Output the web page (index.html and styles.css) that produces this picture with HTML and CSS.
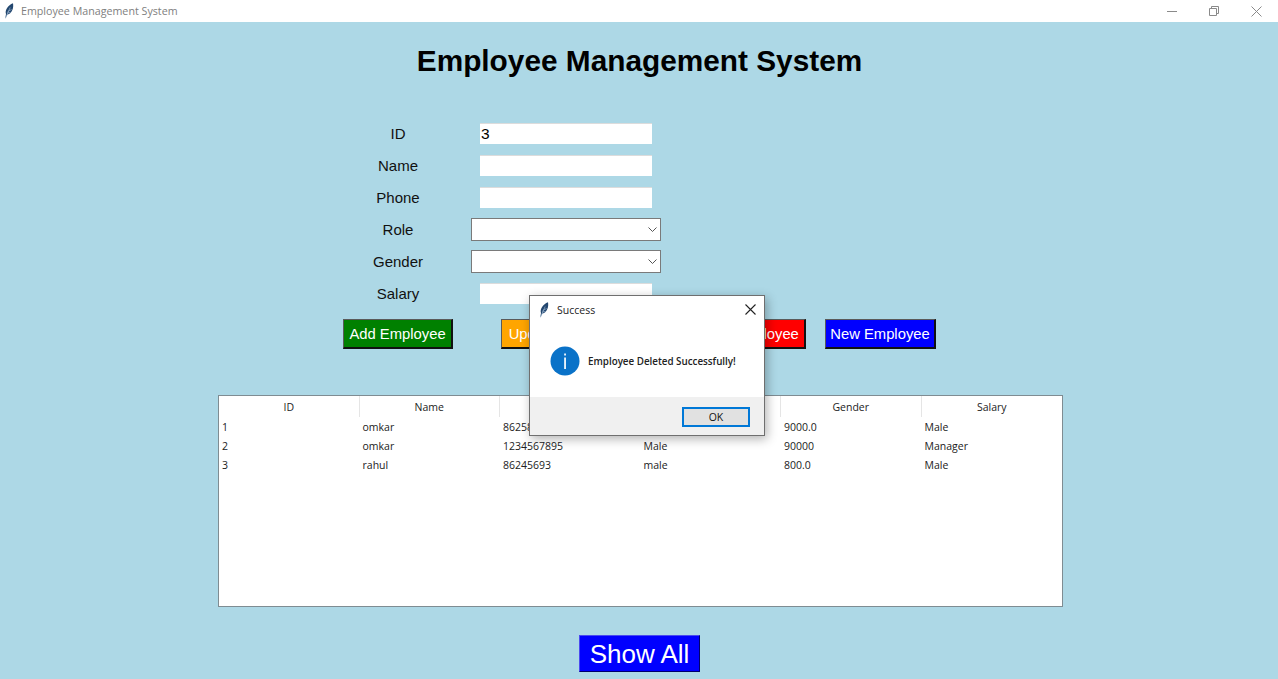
FILE: index.html
```html
<!DOCTYPE html>
<html lang="en">
<head>
    <meta charset="UTF-8">
    <meta name="viewport" content="width=device-width, initial-scale=1.0">
    <title>Employee Management System</title>
    <link rel="stylesheet" href="styles.css">
</head>
<body>
    <div class="titlebar">
        <svg class="feather" width="10" height="16" viewBox="0 0 10 16">
            <path d="M1.2 15.8 L2 11 C0.6 7.5 4 2 9 0.3 C9.8 4.5 8.4 10.5 3.4 11.6 Z" fill="#23476f"/>
            <path d="M1.6 15 L6.2 4.5 M3.6 8.5 L7.6 6.5 M3 10 L6.5 9.5" stroke="#a9c3dc" stroke-width="0.6" fill="none"/>
        </svg>
        <span class="titlebar-text">Employee Management System</span>
        <div class="window-controls">
            <svg width="10" height="10" viewBox="0 0 10 10"><path d="M0 5.5H10" stroke="#8a8a8a" fill="none"/></svg>
            <svg width="10" height="10" viewBox="0 0 10 10"><path d="M0.5 2.5H7.5V9.5H0.5Z M2.5 2.5V0.5H9.5V7.5H7.5" stroke="#8a8a8a" fill="none"/></svg>
            <svg width="11" height="11" viewBox="0 0 11 11"><path d="M0.5 0.5L10.5 10.5M10.5 0.5L0.5 10.5" stroke="#8a8a8a" fill="none"/></svg>
        </div>
    </div>

    <h1 class="heading">Employee Management System</h1>

    <div class="form-grid">
        <label>ID</label>
        <input class="entry" type="text" value="3">
        <label>Name</label>
        <input class="entry" type="text">
        <label>Phone</label>
        <input class="entry" type="text">
        <label>Role</label>
        <div class="combo">
            <svg width="9" height="5" viewBox="0 0 9 5"><path d="M0.5 0.5L4.5 4.5L8.5 0.5" stroke="#555" fill="none"/></svg>
        </div>
        <label>Gender</label>
        <div class="combo">
            <svg width="9" height="5" viewBox="0 0 9 5"><path d="M0.5 0.5L4.5 4.5L8.5 0.5" stroke="#555" fill="none"/></svg>
        </div>
        <label>Salary</label>
        <input class="entry" type="text">
    </div>

    <div class="actions">
        <button class="btn btn-add">Add Employee</button>
        <button class="btn btn-update">Update Employee</button>
        <button class="btn btn-delete">Delete Employee</button>
        <button class="btn btn-new">New Employee</button>
    </div>

    <div class="records-box">
        <table class="records">
            <thead>
                <tr><th>ID</th><th>Name</th><th>Phone</th><th>Role</th><th>Gender</th><th>Salary</th></tr>
            </thead>
            <tbody>
                <tr><td>1</td><td>omkar</td><td>86258</td><td></td><td>9000.0</td><td>Male</td></tr>
                <tr><td>2</td><td>omkar</td><td>1234567895</td><td>Male</td><td>90000</td><td>Manager</td></tr>
                <tr><td>3</td><td>rahul</td><td>86245693</td><td>male</td><td>800.0</td><td>Male</td></tr>
            </tbody>
        </table>
    </div>

    <div class="show-row">
        <button class="btn-show">Show All</button>
    </div>

    <div class="dialog">
        <div class="dialog-title">
            <svg class="feather" width="10" height="16" viewBox="0 0 10 16">
                <path d="M1.2 15.8 L2 11 C0.6 7.5 4 2 9 0.3 C9.8 4.5 8.4 10.5 3.4 11.6 Z" fill="#23476f"/>
                <path d="M1.6 15 L6.2 4.5 M3.6 8.5 L7.6 6.5 M3 10 L6.5 9.5" stroke="#a9c3dc" stroke-width="0.6" fill="none"/>
            </svg>
            <span>Success</span>
            <svg class="dialog-close" width="11" height="11" viewBox="0 0 11 11"><path d="M0.5 0.5L10.5 10.5M10.5 0.5L0.5 10.5" stroke="#222" stroke-width="1.1" fill="none"/></svg>
        </div>
        <div class="dialog-body">
            <svg width="30" height="30" viewBox="0 0 30 30">
                <circle cx="15" cy="15" r="14.5" fill="#0a72c8"/>
                <rect x="14.2" y="11.5" width="1.7" height="11.5" fill="#fff"/>
                <rect x="14.2" y="7.5" width="1.7" height="2" fill="#fff"/>
            </svg>
            <span>Employee Deleted Successfully!</span>
        </div>
        <div class="dialog-footer">
            <button class="btn-ok">OK</button>
        </div>
    </div>
</body>
</html>
```

FILE: styles.css
```css
body {
    font-family: "Liberation Sans", Arial, sans-serif;
    background-color: #add8e6;
    margin: 0;
    padding: 0;
    height: 679px;
    overflow: hidden;
    position: relative;
}
.titlebar {
    display: flex;
    align-items: center;
    height: 22px;
    background-color: #fff;
    padding-left: 4px;
}
.titlebar-text {
    font-family: "Open Sans", sans-serif;
    font-size: 10.7px;
    color: #808080;
    margin-left: 7px;
}
.window-controls {
    display: flex;
    align-items: center;
    gap: 32px;
    margin-left: auto;
    margin-right: 16px;
}
.heading {
    font-size: 29.8px;
    line-height: 34px;
    font-weight: bold;
    color: #000;
    text-align: center;
    margin: 0;
    padding: 22px 0 39px;
    width: 1279px;
}
.form-grid {
    display: grid;
    grid-template-columns: 110px 226px;
    grid-auto-rows: 32px;
    align-items: center;
    justify-items: center;
    margin-left: 343px;
    width: 336px;
}
.form-grid label {
    font-size: 15px;
    color: #111;
}
.entry {
    width: 172px;
    height: 21px;
    box-sizing: border-box;
    border: 0;
    border-top: 1px solid #dcdcdc;
    padding: 0 1px;
    font-family: "Liberation Sans", Arial, sans-serif;
    font-size: 15.5px;
    color: #000;
    background-color: #fff;
}
.combo {
    width: 190px;
    height: 23px;
    box-sizing: border-box;
    border: 1px solid #7a7a7a;
    background-color: #fff;
    display: flex;
    align-items: center;
    justify-content: flex-end;
    padding-right: 3px;
}
.actions {
    display: flex;
    margin: 10px 0 0 343px;
}
.btn {
    height: 30px;
    box-sizing: border-box;
    padding: 0;
    border: 1px solid;
    border-color: #5a5a5a #111 #111 #5a5a5a;
    border-bottom-width: 2px;
    border-right-width: 2px;
    font-family: "Liberation Sans", Arial, sans-serif;
    font-size: 14.8px;
    color: #fff;
    text-align: center;
    white-space: nowrap;
}
.btn-add {
    width: 110px;
    background-color: #008000;
    margin-right: 48px;
}
.btn-update {
    width: 134px;
    background-color: #ffa500;
    margin-right: 45px;
}
.btn-delete {
    width: 126px;
    background-color: #ff0000;
    margin-right: 19px;
}
.btn-new {
    width: 111px;
    background-color: #0000ff;
}
.records-box {
    width: 845px;
    height: 212px;
    box-sizing: border-box;
    margin: 46px 0 0 218px;
    border: 1px solid #7f8c92;
    background-color: #fff;
}
.records {
    width: 843px;
    border-collapse: separate;
    border-spacing: 0;
    table-layout: fixed;
    font-family: "Open Sans", sans-serif;
    font-size: 10.5px;
    line-height: 14px;
    color: #222;
}
.records thead tr {
    height: 21px;
}
.records th {
    font-weight: normal;
    text-align: center;
    padding: 0;
    border-right: 1px solid #e5e5e5;
}
.records th:last-child {
    border-right: 0;
}
.records tbody tr {
    height: 19px;
}
.records td {
    padding: 0 0 0 3px;
    white-space: nowrap;
    overflow: hidden;
}
.show-row {
    display: flex;
    justify-content: center;
    margin-top: 28px;
    padding-left: 1px;
}
.btn-show {
    width: 121px;
    height: 37px;
    box-sizing: border-box;
    padding: 1px 0 0;
    border: 1px solid;
    border-color: #4a4af0 #00006a #00006a #4a4af0;
    background-color: #0000ff;
    font-family: "Liberation Sans", Arial, sans-serif;
    font-size: 26px;
    color: #fff;
}
.dialog {
    position: absolute;
    left: 529px;
    top: 295px;
    width: 236px;
    height: 141px;
    box-sizing: border-box;
    border: 1px solid #6f6f6f;
    background-color: #fff;
    box-shadow: 2px 3px 10px rgba(0, 0, 0, 0.3);
    display: flex;
    flex-direction: column;
    font-family: "Open Sans", sans-serif;
}
.dialog-title {
    display: flex;
    align-items: center;
    height: 27px;
    padding: 0 8px 0 9px;
    font-size: 10.5px;
    color: #222;
}
.dialog-title span {
    margin-left: 8px;
}
.dialog-close {
    margin-left: auto;
}
.dialog-body {
    flex: 1;
    display: flex;
    align-items: center;
    padding: 2px 0 0 20px;
    font-size: 9.8px;
    font-weight: 600;
    color: #222;
}
.dialog-body span {
    margin-left: 8px;
}
.dialog-footer {
    height: 38px;
    background-color: #f0f0f0;
    display: flex;
    align-items: flex-start;
    justify-content: flex-end;
    padding: 10px 14px 0 0;
    box-sizing: border-box;
}
.btn-ok {
    width: 68px;
    height: 20px;
    box-sizing: border-box;
    padding: 0;
    border: 2px solid #0078d7;
    background-color: #e1e1e1;
    font-family: "Open Sans", sans-serif;
    font-size: 10.5px;
    color: #111;
}
```
